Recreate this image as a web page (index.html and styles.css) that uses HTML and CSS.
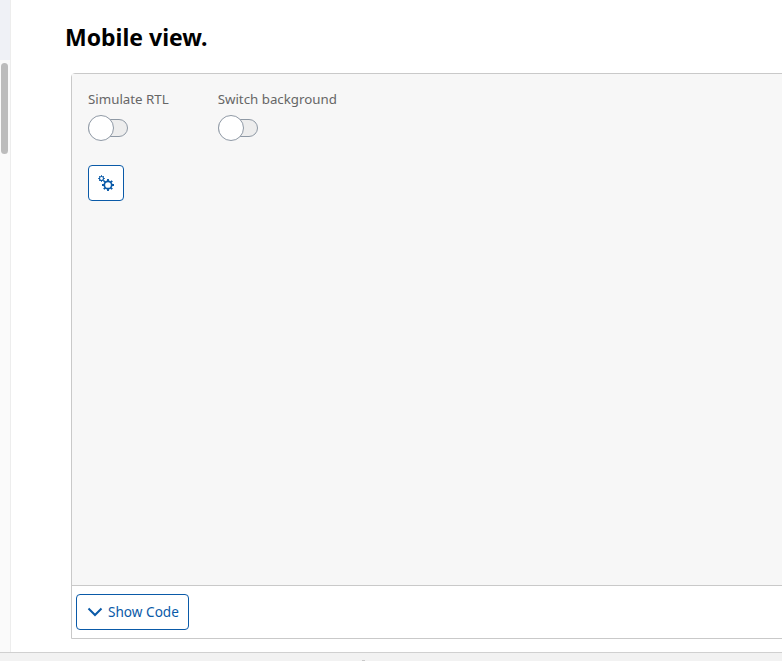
FILE: index.html
```html
<!DOCTYPE html>
<html lang="en">
<head>
    <meta charset="UTF-8">
    <title>Mobile view</title>
    <link rel="stylesheet" href="styles.css">
</head>
<body>
    <div class="layout">
        <div class="rail">
            <div class="rail-top"></div>
            <div class="scroll-thumb"></div>
        </div>
        <main class="content">
            <h2 class="title">Mobile view.</h2>
            <div class="example">
                <div class="preview">
                    <div class="toggles">
                        <div class="toggle-group">
                            <span class="toggle-label">Simulate RTL</span>
                            <span class="switch"><span class="switch-handle"></span></span>
                        </div>
                        <div class="toggle-group">
                            <span class="toggle-label">Switch background</span>
                            <span class="switch"><span class="switch-handle"></span></span>
                        </div>
                    </div>
                    <button class="btn btn-icon" aria-label="Settings">
                        <svg width="18" height="18" viewBox="0 0 18 18" fill="none" stroke="#0a5aa8">
                            <!-- small gear -->
                            <circle cx="4.5" cy="4.5" r="2" stroke-width="1.100"/>
                            <path d="M4.500 1.200v1.200M4.500 6.600v1.200M1.200 4.500h1.200M6.600 4.500h1.200M2.200 2.200l.8.8M6 6l.8.8M6.800 2.200l-.8.8M3 6l-.8.8" stroke-width="1"/>
                            <!-- big gear -->
                            <circle cx="11" cy="11" r="3.700" stroke-width="1.700"/>
                            <path d="M11 5v2M11 15v2M5 11h2M15 11h2M6.800 6.800l1.400 1.400M13.800 13.800l1.400 1.400M15.200 6.800l-1.400 1.400M8.200 13.800l-1.400 1.400" stroke-width="1.900"/>
                        </svg>
                    </button>
                </div>
                <div class="example-footer">
                    <button class="btn btn-code">
                        <svg width="16" height="10" viewBox="0 0 16 10" fill="none" stroke="#0a5aa8" stroke-width="2">
                            <path d="M1.500 1.500L8 8l6.500-6.500"/>
                        </svg>
                        <span class="btn-text">Show Code</span>
                    </button>
                </div>
            </div>
        </main>
    </div>
    <div class="bottom-bar"><span class="bar-dot"></span></div>
</body>
</html>
```

FILE: styles.css
```css
html, body {
    height: 100%;
}
body {
    margin: 0;
    overflow: hidden;
    display: flex;
    flex-direction: column;
    background: #fff;
    font-family: "Noto Sans", "Open Sans", Arial, sans-serif;
}
.layout {
    flex: 1;
    min-height: 0;
    display: flex;
}
.rail {
    flex: none;
    width: 10px;
    background: #fafafa;
    border-right: 1px solid #ededed;
}
.rail-top {
    height: 60px;
    background: #eff1f6;
}
.scroll-thumb {
    width: 7px;
    height: 91px;
    margin: 3px 0 0 1px;
    border-radius: 4px;
    background: #bcbcbc;
}
.content {
    flex: 1;
    min-width: 0;
    overflow: hidden;
    padding-left: 54px;
}
.title {
    margin: 0;
    padding-top: 21px;
    font-size: 23px;
    line-height: 33px;
    font-weight: 700;
    color: #000;
}
.example {
    width: 760px;
    height: 566px;
    margin: 19px 0 0 6px;
    display: flex;
    flex-direction: column;
    border: 1px solid #c9c9c9;
    border-radius: 4px 0 0 0;
    box-sizing: border-box;
}
.preview {
    flex: 1;
    padding: 16px 16px;
    background: #f7f7f7;
    border-bottom: 1px solid #c9c9c9;
}
.toggles {
    display: flex;
    gap: 49px;
}
.toggle-group {
    display: flex;
    flex-direction: column;
    align-items: flex-start;
}
.toggle-label {
    font-size: 13.3px;
    line-height: 18px;
    color: #666;
}
.switch {
    position: relative;
    width: 40px;
    height: 18px;
    margin-top: 11px;
    box-sizing: border-box;
    border: 1px solid #8f99a5;
    border-radius: 9px;
    background: #ededed;
}
.switch-handle {
    position: absolute;
    left: -1px;
    top: -5px;
    width: 26px;
    height: 26px;
    box-sizing: border-box;
    border: 1px solid #8f99a5;
    border-radius: 50%;
    background: #fff;
}
.btn {
    display: flex;
    align-items: center;
    height: 36px;
    box-sizing: border-box;
    border: 1px solid #0a5aa8;
    border-radius: 4px;
    background: #fff;
    color: #0a5aa8;
    font-family: inherit;
    padding: 0;
}
.btn-icon {
    width: 36px;
    justify-content: center;
    margin-top: 28px;
}
.example-footer {
    flex: none;
    height: 52px;
    padding: 8px 4px;
    box-sizing: border-box;
}
.btn-code {
    width: 113px;
    gap: 5px;
    padding-left: 10px;
    font-size: 13.6px;
}
.btn-text {
    margin-top: -2px;
}
.bottom-bar {
    flex: none;
    height: 8px;
    display: flex;
    align-items: flex-end;
    padding-left: 362px;
    background: #f2f2f2;
    border-top: 1px solid #d0d0d0;
}
.bar-dot {
    width: 3px;
    height: 1px;
    background: #c9c9c9;
}
```
